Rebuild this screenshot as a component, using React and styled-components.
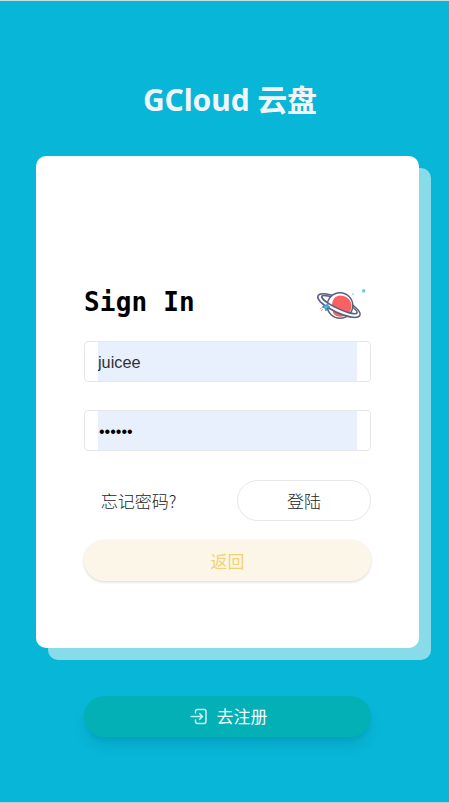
import React from "react";
import styled, { createGlobalStyle, css } from "styled-components";

const GlobalStyle = createGlobalStyle`
  * { box-sizing: border-box; }
  body { margin: 0; overflow: hidden; }
`;

const Page = styled.main`
  height: 803px;
  background: #08b6d8;
  border-top: 1px solid #c9dfe2;
  border-bottom: 1px solid #9fd6e0;
  display: flex;
  flex-direction: column;
  align-items: center;
  padding: 73px 18px 0 36px;
  font-family: "Noto Sans", "Noto Sans CJK SC", sans-serif;
`;

const Title = styled.h1`
  margin: 0 7px 0 0;
  height: 52px;
  line-height: 52px;
  font-size: 30px;
  font-weight: 700;
  color: #f1f5f9;
  white-space: nowrap;
  letter-spacing: -0.1px;
`;

const Card = styled.form`
  width: 383px;
  height: 492px;
  margin: 30px 12px 0 0;
  padding: 128px 48px 0;
  border-radius: 10px;
  background: #fff;
  box-shadow: 12px 12px 0 #88dcea;
  display: flex;
  flex-direction: column;
`;

const Heading = styled.div`
  display: flex;
  justify-content: space-between;
  align-items: center;
  height: 40px;
  padding-right: 4px;
`;

const HeadingText = styled.h2`
  margin: -4px 0 0;
  font: 700 26px/36px "DejaVu Sans Mono", monospace;
  letter-spacing: 0.2px;
  color: #000;
`;

const Planet = styled.svg`
  width: 52px;
  height: 40px;
  display: block;
`;

const Field = styled.div`
  height: 41px;
  margin-top: ${(p) => p.$gap}px;
  padding: 0 13px;
  border: 1px solid #e5e7eb;
  border-radius: 4px;
  flex: none;
`;

const Input = styled.input`
  display: block;
  width: 100%;
  height: 39px;
  padding: ${(p) => (p.type === "password" ? "3px 0 0 1px" : "1px 0 0")};
  border: 0;
  outline: 0;
  background: #e8effd;
  color: ${(p) => (p.type === "password" ? "#000" : "#303133")};
  font-family: "Liberation Sans", Arial, sans-serif;
  font-size: ${(p) => (p.type === "password" ? "16px" : "16.3px")};
`;

const Actions = styled.div`
  display: flex;
  justify-content: space-between;
  margin-top: 29px;
`;

const pill = css`
  height: 41px;
  border-radius: 21px;
  border: 0;
  padding: 0 0 1px;
  font-family: "Noto Sans CJK SC", sans-serif;
  font-size: 17px;
  display: flex;
  align-items: center;
  justify-content: center;
`;

const ForgotButton = styled.button`
  ${pill}
  width: 109px;
  background: transparent;
  color: #202328;
  font-weight: 300;
`;

const LoginButton = styled.button`
  ${pill}
  width: 134px;
  background: #fff;
  border: 1px solid #e5e7eb;
  color: #202328;
  font-weight: 300;
`;

const BackButton = styled.button`
  ${pill}
  width: 100%;
  margin-top: 19px;
  background: #fbf6e7;
  color: #efd477;
  box-shadow: 0 1px 3px rgba(0, 0, 0, 0.16);
`;

const RegisterButton = styled.button`
  ${pill}
  width: 287px;
  margin: 48px 12px 0 0;
  padding: 0 0 2px 2px;
  gap: 9px;
  background: #02b0b5;
  color: #f0ffff;
  box-shadow: 0 10px 15px -3px rgba(0, 0, 0, 0.1), 0 4px 6px -2px rgba(0, 0, 0, 0.05);
`;

const EnterIcon = styled.svg`
  width: 18px;
  height: 18px;
  fill: none;
  stroke: #c6f2f2;
  stroke-width: 1.5;
  stroke-linecap: round;
  stroke-linejoin: round;
`;

function PlanetDrawing() {
  return (
    <Planet viewBox="0 0 52 40" aria-hidden="true">
      <g transform="rotate(25 24 21.500)" stroke="#596080" strokeWidth="1.5">
        <ellipse cx="24" cy="21.500" rx="23" ry="7.200" fill="#f7f9fc" />
        <ellipse cx="24" cy="20.500" rx="19.500" ry="4.200" fill="#fff" />
      </g>
      <circle cx="25" cy="21.500" r="12.800" fill="#fff" stroke="#596080" strokeWidth="1.5" />
      <path d="M25 11.500c6 0 11.500 4 11.500 10.500 0 6-5 10.800-11 10.800-3.500 0-6-1.500-7.500-4 0-2-1-4-1-7 0-6 3-10 8-10.300Z" fill="#fa6163" />
      <g transform="rotate(25 24 21.500)">
        <path d="M4.500 20.500C5 26 43 26 43.500 20.500L47 21.500C47 31 1 31 1 21.500Z" fill="#f7f9fc" />
        <path d="M4.500 20.500C5 26 43 26 43.500 20.500M1 21.500C1 31 47 31 47 21.500" fill="none" stroke="#596080" strokeWidth="1.5" />
      </g>
      <path d="m8 21 3 .5 2-2.500 0 3 2 1-3 1-1 3-1-3-3-1 2-1Z" fill="#43b9e5" stroke="#3288b4" strokeWidth=".8" />
      <path d="m5 25 3-2m-2 4 2-2" stroke="#ff9ba0" strokeWidth="1" />
      <circle cx="48.700" cy="6.900" r="1.800" fill="#6acdf2" />
      <circle cx="38" cy="10" r="1" fill="#9addf5" />
    </Planet>
  );
}

export default function App() {
  return (
    <>
      <GlobalStyle />
      <Page>
        <Title>GCloud 云盘</Title>
        <Card onSubmit={(e) => e.preventDefault()}>
          <Heading>
            <HeadingText>Sign In</HeadingText>
            <PlanetDrawing />
          </Heading>
          <Field $gap={17}>
            <Input type="text" defaultValue="juicee" aria-label="用户名" />
          </Field>
          <Field $gap={28}>
            <Input type="password" defaultValue="123456" aria-label="密码" />
          </Field>
          <Actions>
            <ForgotButton type="button">忘记密码?</ForgotButton>
            <LoginButton type="submit">登陆</LoginButton>
          </Actions>
          <BackButton type="button">返回</BackButton>
        </Card>
        <RegisterButton type="button">
          <EnterIcon viewBox="0 0 18 18" aria-hidden="true">
            <path d="M5.500 6V4.500a2 2 0 0 1 2-2H14a2 2 0 0 1 2 2v10a2 2 0 0 1-2 2H7.500a2 2 0 0 1-2-2V13M1 9.500h11M9.500 6.500l3 3-3 3" />
          </EnterIcon>
          去注册
        </RegisterButton>
      </Page>
    </>
  );
}
